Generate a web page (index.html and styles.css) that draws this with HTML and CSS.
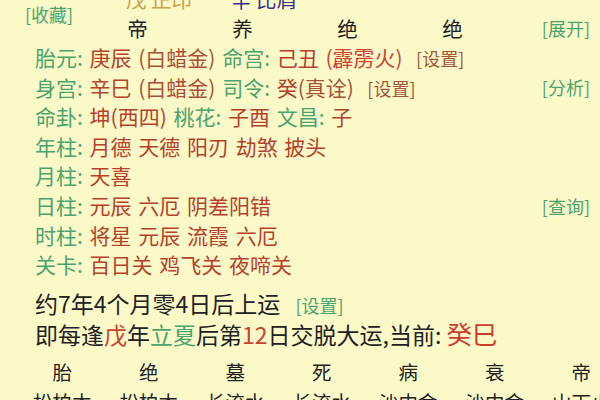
FILE: index.html
```html
<!DOCTYPE html>
<html lang="zh">

<head>
    <meta charset="UTF-8" />
    <title>排盘</title>
    <link rel="stylesheet" href="styles.css">
</head>

<body>

    <div class="sheet">
        <div class="pillars">
            <a class="link keep">[收藏]</a>
            <span class="ten gold">戊 正印</span>
            <span class="ten navy">辛 比肩</span>
            <span></span>
            <span></span>
            <span></span>

            <span class="stage">帝</span>
            <span class="stage">养</span>
            <span class="stage">绝</span>
            <span class="stage">绝</span>
            <a class="link open">[展开]</a>
        </div>

        <div class="info">
            <div class="row">
                <span class="text"><span class="label">胎元: </span><span class="val">庚辰 </span><span class="sub">(白蜡金)</span> <span class="label">命宫: </span><span class="val">己丑 </span><span class="sub red">(霹雳火)</span>  <a class="set">[设置]</a></span>
            </div>
            <div class="row">
                <span class="text"><span class="label">身宫: </span><span class="val">辛巳 </span><span class="sub">(白蜡金)</span> <span class="label">司令: </span><span class="val">癸</span><span class="sub">(真诠)</span>  <a class="set">[设置]</a></span>
                <a class="link">[分析]</a>
            </div>
            <div class="row">
                <span class="text"><span class="label">命卦: </span><span class="val">坤(西四)</span> <span class="label">桃花: </span><span class="val">子酉</span> <span class="label">文昌: </span><span class="val">子</span></span>
            </div>
            <div class="row">
                <span class="text"><span class="label">年柱: </span><span class="val">月德 天德 阳刃 劫煞 披头</span></span>
            </div>
            <div class="row">
                <span class="text"><span class="label">月柱: </span><span class="val">天喜</span></span>
            </div>
            <div class="row">
                <span class="text"><span class="label">日柱: </span><span class="val">元辰 六厄 阴差阳错</span></span>
                <a class="link">[查询]</a>
            </div>
            <div class="row">
                <span class="text"><span class="label">时柱: </span><span class="val">将星 元辰 流霞 六厄</span></span>
            </div>
            <div class="row">
                <span class="text"><span class="label">关卡: </span><span class="val">百日关 鸡飞关 夜啼关</span></span>
            </div>

            <div class="luck">约7年4个月零4日后上运 <a class="link small">[设置]</a></div>
            <div class="luck next">即每逢<span class="hl-red">戊</span>年<span class="hl-green">立夏</span>后第<span class="hl-red">12</span>日交脱大运,当前: <span class="now">癸巳</span></div>
        </div>

        <div class="cycle">
            <span>胎</span>
            <span>绝</span>
            <span>墓</span>
            <span>死</span>
            <span>病</span>
            <span>衰</span>
            <span>帝</span>

            <span>松柏木</span>
            <span>松柏木</span>
            <span>长流水</span>
            <span>长流水</span>
            <span>沙中金</span>
            <span>沙中金</span>
            <span>山下火</span>
        </div>
    </div>

</body>

</html>
```

FILE: styles.css
```css
body {
    background-color: #fcf9c8;
    margin: 0;
    font-family: "Noto Sans CJK SC", "Noto Sans", sans-serif;
    color: #222;
    overflow: hidden;
    height: 400px;
}

.sheet {
    margin-top: -15px;
}

.link {
    color: #4ba46d;
    font-size: 18px;
    white-space: nowrap;
}

.pillars {
    display: grid;
    grid-template-columns: 60px repeat(4, 105px) 1fr;
    grid-template-rows: 29px 29px;
    padding: 0 10px 0 25px;
    font-size: 20.5px;
    line-height: 29px;
}

.keep {
    grid-row: 1 / 3;
    align-self: center;
}

.ten {
    padding-left: 41px;
    white-space: nowrap;
}

.gold {
    color: #c9a24a;
}

.navy {
    color: #34348f;
}

.stage {
    text-align: center;
}

.open {
    justify-self: end;
}

.info {
    padding: 0 10px 0 35px;
}

.row {
    display: flex;
    justify-content: space-between;
    align-items: center;
    height: 29.6px;
    line-height: 29.6px;
}

.row .text {
    font-size: 21px;
    white-space: pre;
    word-spacing: 2px;
}

.row .link,
.row .set {
    line-height: 20px;
    word-spacing: 0;
}

.label {
    color: #4ba46d;
}

.val {
    color: #b4412c;
}

.sub {
    color: #a8503a;
}

.sub.red {
    color: #cc4433;
}

.set {
    color: #a3573a;
    font-size: 18px;
}

.luck {
    font-size: 23px;
    height: 32px;
    line-height: 32px;
    margin-top: 7px;
    color: #222;
    word-spacing: 10px;
}

.luck .small {
    font-size: 18px;
    line-height: 20px;
    word-spacing: 0;
}

.next {
    margin-top: 0;
    height: 30px;
    line-height: 30px;
    word-spacing: 0;
}

.hl-red {
    color: #c8432f;
}

.hl-green {
    color: #4ba46d;
}

.now {
    color: #cc3b2e;
    font-size: 25.5px;
    line-height: 20px;
}

.cycle {
    display: grid;
    grid-template-columns: repeat(7, 86.5px);
    padding-left: 19px;
    margin-top: 8px;
    font-size: 19.5px;
    line-height: 30px;
    text-align: center;
    white-space: nowrap;
}
```
